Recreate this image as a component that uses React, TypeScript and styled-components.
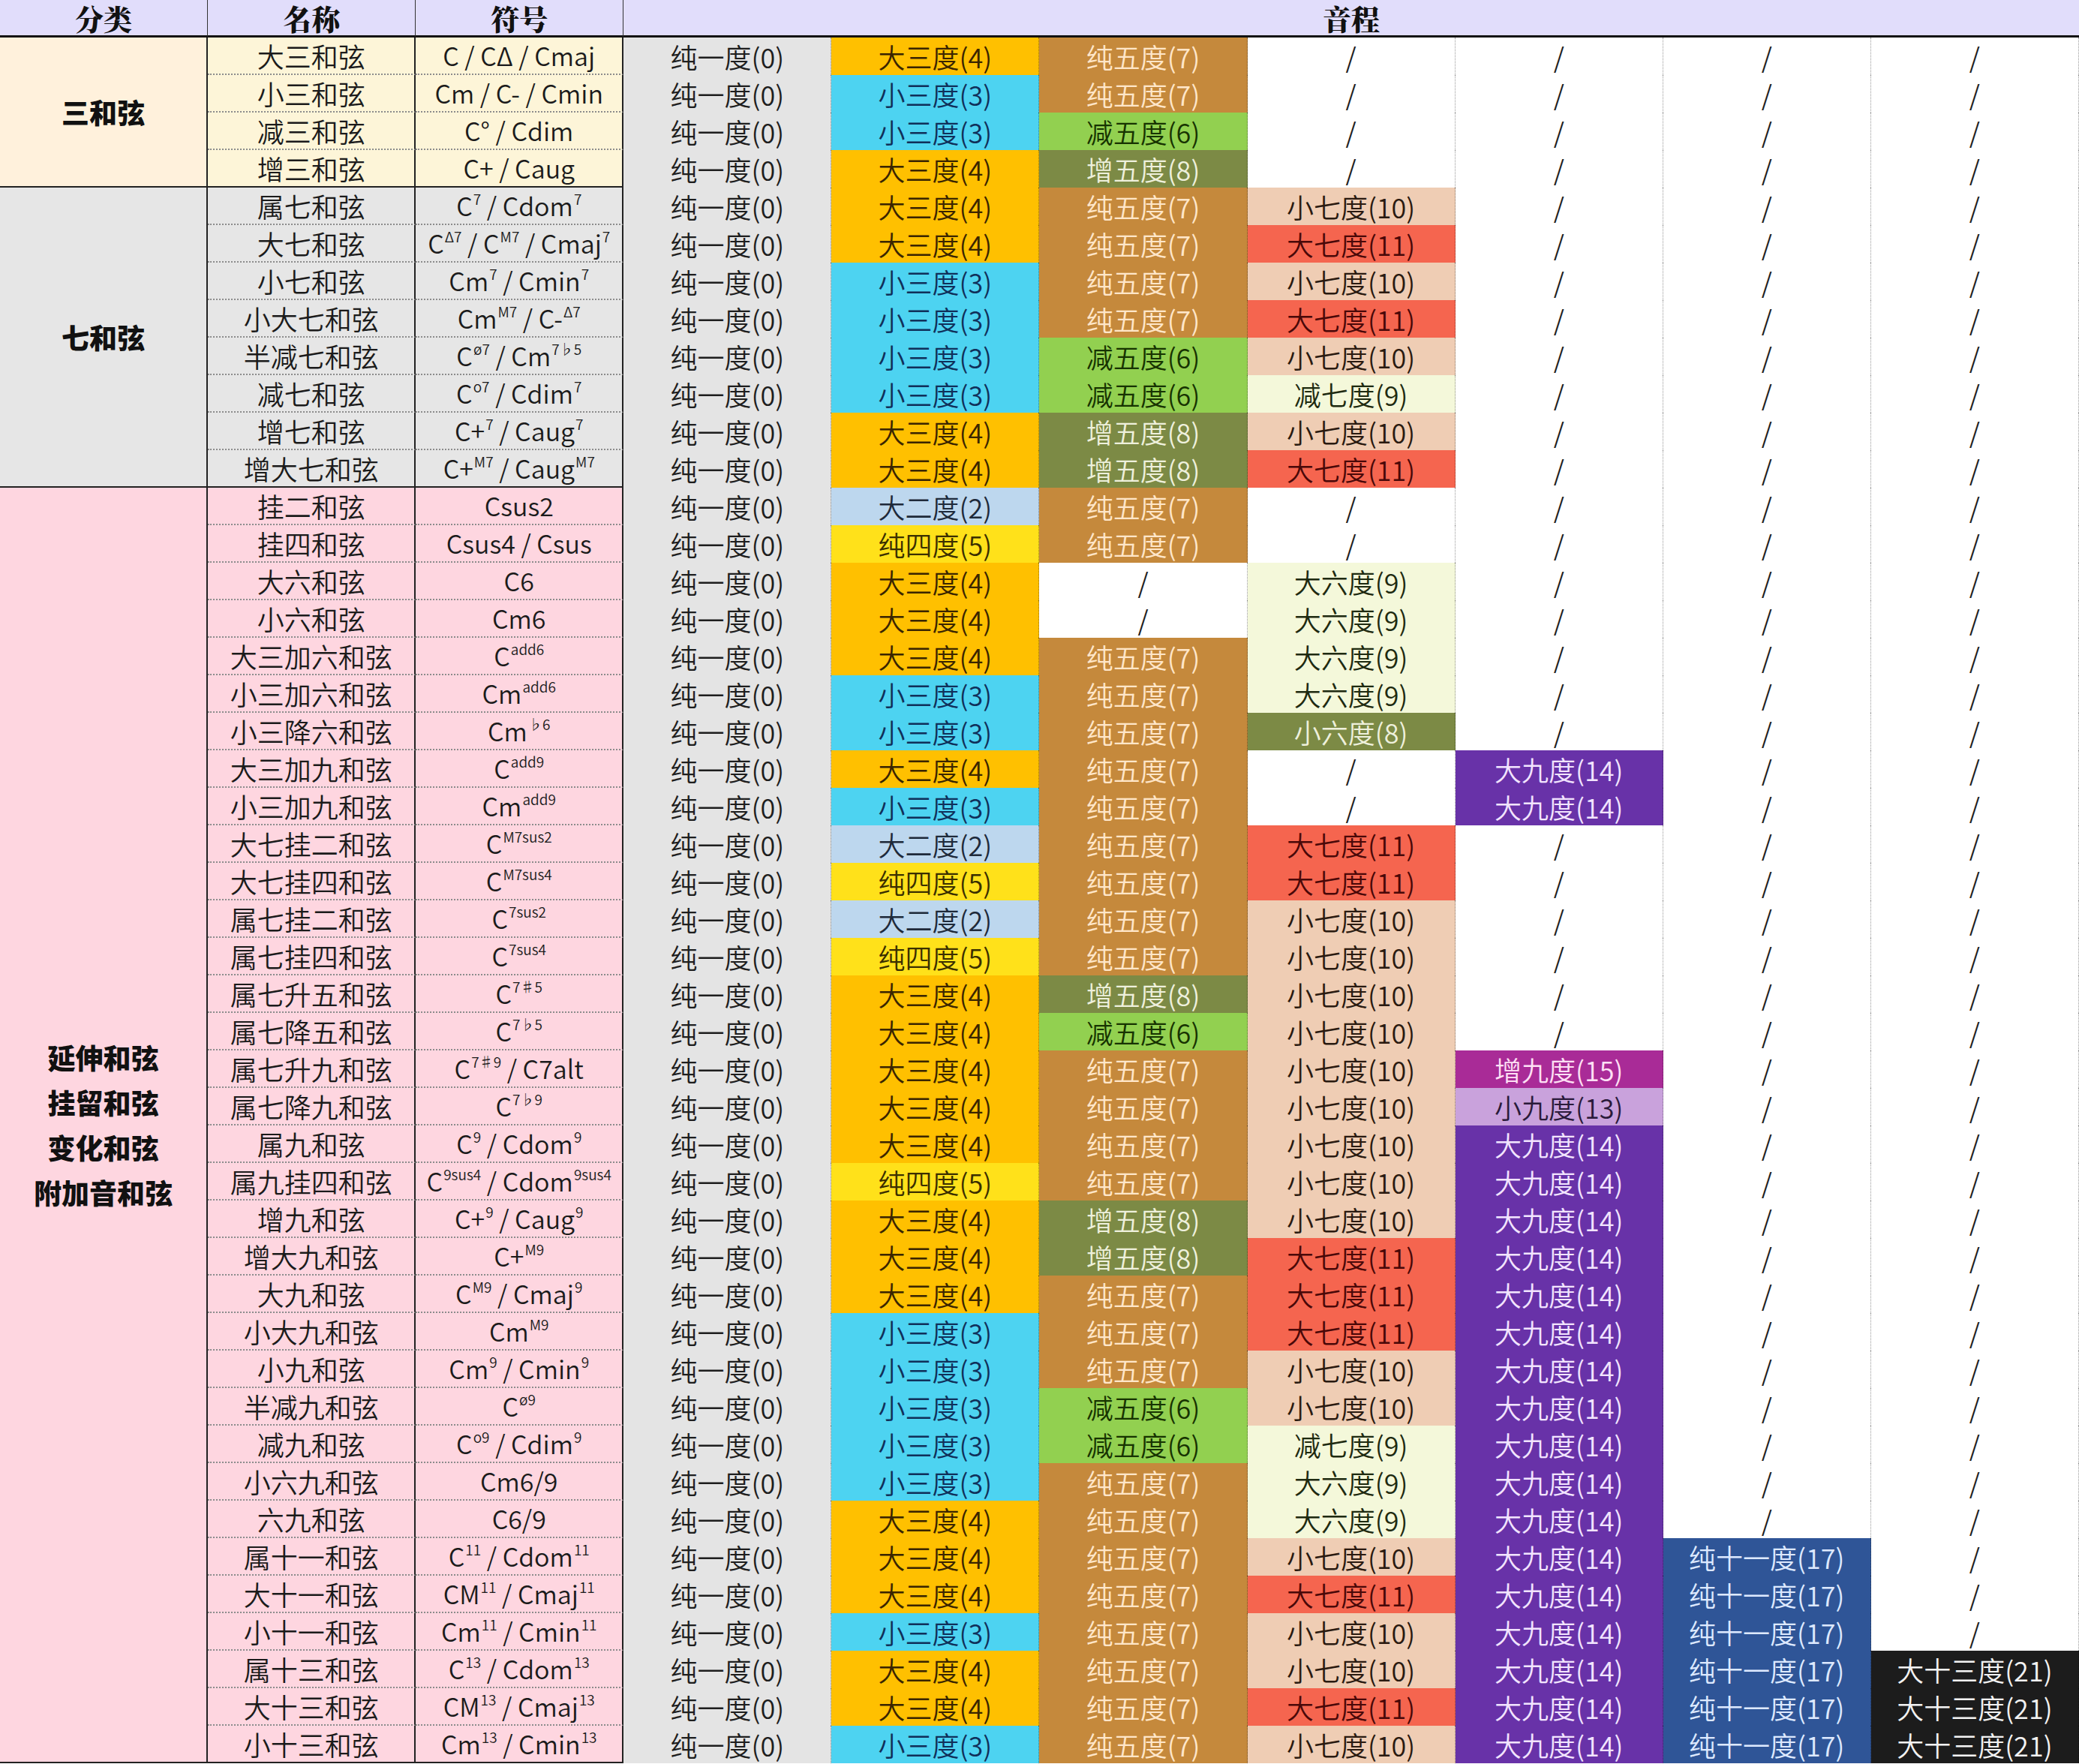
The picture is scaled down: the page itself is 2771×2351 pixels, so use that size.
import React from "react";
import styled, { createGlobalStyle } from "styled-components";

const GlobalStyle = createGlobalStyle`
  html, body { margin: 0; padding: 0; background: #ffffff; }
  body { font-family: "Noto Sans CJK SC", "Noto Sans", sans-serif; }
  #root { width: 2771px; }
`;

const Table = styled.div`
  display: grid;
  grid-template-columns: repeat(10, 277.1px);
  grid-template-rows: 50px repeat(46, 50px);
  width: 2771px;
  font-family: "Noto Sans CJK SC", "Noto Sans", sans-serif;
  font-size: 36px;
  font-weight: 350;
  color: #1b1b1b;
  line-height: 1;
`;

const HeadCell = styled.div<{ $span?: number; $last?: boolean }>`
  grid-column: span ${(p) => p.$span ?? 1};
  box-sizing: border-box;
  display: flex;
  align-items: center;
  justify-content: center;
  background: #e1ddfb;
  border-bottom: 3px solid #111;
  border-right: ${(p) => (p.$last ? "none" : "1px solid #333")};
  font-family: "Noto Serif CJK SC", "Noto Sans CJK SC", serif;
  font-weight: 900;
  font-size: 38px;
  color: #111;
`;

const CategoryCell = styled.div<{ $rows: number; $bg: string }>`
  grid-column: 1;
  grid-row: span ${(p) => p.$rows};
  box-sizing: border-box;
  display: flex;
  flex-direction: column;
  align-items: center;
  justify-content: center;
  background: ${(p) => p.$bg};
  border-right: 2px solid #222;
  border-bottom: 2px solid #222;
  font-weight: 900;
  font-size: 37px;
  line-height: 60px;
  color: #111;
`;

const NameCell = styled.div<{ $bg: string; $end: boolean }>`
  box-sizing: border-box;
  display: flex;
  align-items: center;
  justify-content: center;
  background: ${(p) => p.$bg};
  border-right: 2px solid #222;
  border-bottom: ${(p) => (p.$end ? "2px solid #222" : "2px dotted #8c8c8c")};
  white-space: nowrap;
`;

const SymbolCell = styled(NameCell)`
  font-size: 34px;
`;

const Text = styled.span`
  display: inline-block;
  white-space: pre;
  line-height: 1;
`;

const Sup = styled.span`
  font-size: 0.56em;
  vertical-align: 0.8em;
  line-height: 0;
  margin-left: 1px;
`;

const IntervalCell = styled.div<{ $bg: string; $fg: string }>`
  box-sizing: border-box;
  display: flex;
  align-items: center;
  justify-content: center;
  background: ${(p) => p.$bg};
  color: ${(p) => p.$fg};
  border-right: 1px dotted rgba(0, 0, 0, 0.4);
  white-space: nowrap;
`;

const IV: Record<string, [string, string]> = {
  "纯一度(0)": ["#e4e4e4", "#1e1e1e"],
  "大三度(4)": ["#ffc000", "#3a2500"],
  "小三度(3)": ["#4dd3f1", "#10305a"],
  "大二度(2)": ["#bdd7ee", "#1e2a3a"],
  "纯四度(5)": ["#ffe11a", "#3a2f00"],
  "纯五度(7)": ["#c5893c", "#ffe6c9"],
  "减五度(6)": ["#92d050", "#173300"],
  "增五度(8)": ["#7c8a45", "#eef0dc"],
  "小六度(8)": ["#7c8a45", "#eef0dc"],
  "小七度(10)": ["#efcdb4", "#2a1a10"],
  "大七度(11)": ["#f5654f", "#4a0808"],
  "减七度(9)": ["#f4f8da", "#1e2a10"],
  "大六度(9)": ["#f4f8da", "#1e2a10"],
  "大九度(14)": ["#6832a8", "#f2e4ff"],
  "增九度(15)": ["#a92b97", "#ffe0f5"],
  "小九度(13)": ["#c9a2dc", "#2a1a3a"],
  "纯十一度(17)": ["#2f5597", "#dde9ff"],
  "大十三度(21)": ["#1c1c1c", "#f2f2f2"],
  "/": ["#ffffff", "#1e1e1e"],
};

type Row = [string, string, string[]];

const M3 = "大三度(4)";
const m3 = "小三度(3)";
const M2 = "大二度(2)";
const P4 = "纯四度(5)";
const P5 = "纯五度(7)";
const d5 = "减五度(6)";
const A5 = "增五度(8)";
const m7 = "小七度(10)";
const M7 = "大七度(11)";
const d7 = "减七度(9)";
const M6 = "大六度(9)";
const m6 = "小六度(8)";
const M9 = "大九度(14)";
const A9 = "增九度(15)";
const m9 = "小九度(13)";
const P11 = "纯十一度(17)";
const M13 = "大十三度(21)";
const X = "/";

const groups: { label: string[]; catBg: string; rowBg: string; rows: Row[] }[] = [
  {
    label: ["三和弦"],
    catBg: "#fff1dc",
    rowBg: "#fdf5d8",
    rows: [
      ["大三和弦", "C / CΔ / Cmaj", [M3, P5]],
      ["小三和弦", "Cm / C- / Cmin", [m3, P5]],
      ["减三和弦", "C° / Cdim", [m3, d5]],
      ["增三和弦", "C+ / Caug", [M3, A5]],
    ],
  },
  {
    label: ["七和弦"],
    catBg: "#e6e6e6",
    rowBg: "#e6e6e6",
    rows: [
      ["属七和弦", "C^{7} / Cdom^{7}", [M3, P5, m7]],
      ["大七和弦", "C^{Δ7} / C^{M7} / Cmaj^{7}", [M3, P5, M7]],
      ["小七和弦", "Cm^{7} / Cmin^{7}", [m3, P5, m7]],
      ["小大七和弦", "Cm^{M7} / C-^{Δ7}", [m3, P5, M7]],
      ["半减七和弦", "C^{ø7} / Cm^{7♭5}", [m3, d5, m7]],
      ["减七和弦", "C^{o7} / Cdim^{7}", [m3, d5, d7]],
      ["增七和弦", "C+^{7} / Caug^{7}", [M3, A5, m7]],
      ["增大七和弦", "C+^{M7} / Caug^{M7}", [M3, A5, M7]],
    ],
  },
  {
    label: ["延伸和弦", "挂留和弦", "变化和弦", "附加音和弦"],
    catBg: "#fed6e0",
    rowBg: "#fed6e0",
    rows: [
      ["挂二和弦", "Csus2", [M2, P5, X]],
      ["挂四和弦", "Csus4 / Csus", [P4, P5, X]],
      ["大六和弦", "C6", [M3, X, M6]],
      ["小六和弦", "Cm6", [M3, X, M6]],
      ["大三加六和弦", "C^{add6}", [M3, P5, M6]],
      ["小三加六和弦", "Cm^{add6}", [m3, P5, M6]],
      ["小三降六和弦", "Cm^{♭6}", [m3, P5, m6]],
      ["大三加九和弦", "C^{add9}", [M3, P5, X, M9]],
      ["小三加九和弦", "Cm^{add9}", [m3, P5, X, M9]],
      ["大七挂二和弦", "C^{M7sus2}", [M2, P5, M7]],
      ["大七挂四和弦", "C^{M7sus4}", [P4, P5, M7]],
      ["属七挂二和弦", "C^{7sus2}", [M2, P5, m7]],
      ["属七挂四和弦", "C^{7sus4}", [P4, P5, m7]],
      ["属七升五和弦", "C^{7♯5}", [M3, A5, m7]],
      ["属七降五和弦", "C^{7♭5}", [M3, d5, m7]],
      ["属七升九和弦", "C^{7♯9} / C7alt", [M3, P5, m7, A9]],
      ["属七降九和弦", "C^{7♭9}", [M3, P5, m7, m9]],
      ["属九和弦", "C^{9} / Cdom^{9}", [M3, P5, m7, M9]],
      ["属九挂四和弦", "C^{9sus4} / Cdom^{9sus4}", [P4, P5, m7, M9]],
      ["增九和弦", "C+^{9} / Caug^{9}", [M3, A5, m7, M9]],
      ["增大九和弦", "C+^{M9}", [M3, A5, M7, M9]],
      ["大九和弦", "C^{M9} / Cmaj^{9}", [M3, P5, M7, M9]],
      ["小大九和弦", "Cm^{M9}", [m3, P5, M7, M9]],
      ["小九和弦", "Cm^{9} / Cmin^{9}", [m3, P5, m7, M9]],
      ["半减九和弦", "C^{ø9}", [m3, d5, m7, M9]],
      ["减九和弦", "C^{o9} / Cdim^{9}", [m3, d5, d7, M9]],
      ["小六九和弦", "Cm6/9", [m3, P5, M6, M9]],
      ["六九和弦", "C6/9", [M3, P5, M6, M9]],
      ["属十一和弦", "C^{11} / Cdom^{11}", [M3, P5, m7, M9, P11]],
      ["大十一和弦", "CM^{11} / Cmaj^{11}", [M3, P5, M7, M9, P11]],
      ["小十一和弦", "Cm^{11} / Cmin^{11}", [m3, P5, m7, M9, P11]],
      ["属十三和弦", "C^{13} / Cdom^{13}", [M3, P5, m7, M9, P11, M13]],
      ["大十三和弦", "CM^{13} / Cmaj^{13}", [M3, P5, M7, M9, P11, M13]],
      ["小十三和弦", "Cm^{13} / Cmin^{13}", [m3, P5, m7, M9, P11, M13]],
    ],
  },
];

function renderSymbol(s: string) {
  const parts = s.split(/\^\{([^}]*)\}/);
  return (
    <Text>
      {parts.map((p, i) =>
        i % 2 === 1 ? <Sup key={i}>{p}</Sup> : <React.Fragment key={i}>{p}</React.Fragment>
      )}
    </Text>
  );
}

export default function App() {
  return (
    <>
      <GlobalStyle />
      <Table>
        <HeadCell>分类</HeadCell>
        <HeadCell>名称</HeadCell>
        <HeadCell>符号</HeadCell>
        <HeadCell $span={7} $last>
          音程
        </HeadCell>
        {groups.map((g, gi) =>
          g.rows.map((r, ri) => {
            const end = ri === g.rows.length - 1;
            const ivs = ["纯一度(0)", ...r[2]];
            while (ivs.length < 7) ivs.push(X);
            return (
              <React.Fragment key={`${gi}-${ri}`}>
                {ri === 0 && (
                  <CategoryCell $rows={g.rows.length} $bg={g.catBg}>
                    {g.label.map((l) => (
                      <span key={l}>{l}</span>
                    ))}
                  </CategoryCell>
                )}
                <NameCell $bg={g.rowBg} $end={end}>
                  {r[0]}
                </NameCell>
                <SymbolCell $bg={g.rowBg} $end={end}>
                  {renderSymbol(r[1])}
                </SymbolCell>
                {ivs.map((iv, k) => {
                  const [bg, fg] = IV[iv];
                  return (
                    <IntervalCell key={k} $bg={bg} $fg={fg}>
                      {iv}
                    </IntervalCell>
                  );
                })}
              </React.Fragment>
            );
          })
        )}
      </Table>
    </>
  );
}
